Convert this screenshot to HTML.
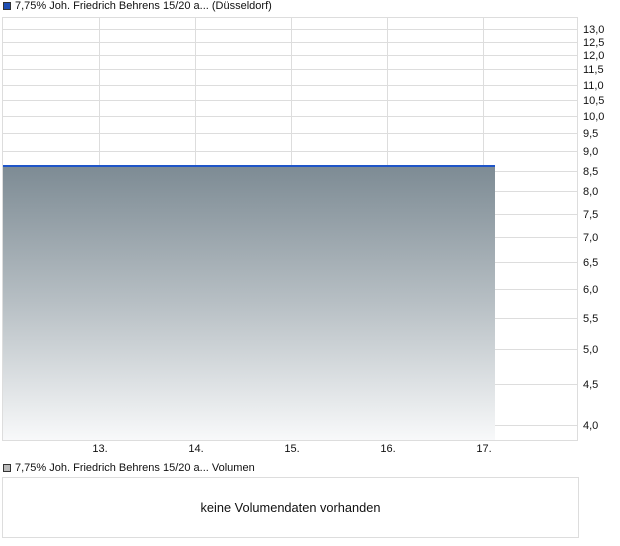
<!DOCTYPE html>
<html><head><style>
body{margin:0;width:620px;height:546px;background:#fff;font-family:"Liberation Sans",sans-serif;font-size:11px;color:#111;position:relative;overflow:hidden}
.a{position:absolute}
.h{position:absolute;left:3px;width:575px;height:1px;background:#ddd}
.v{position:absolute;top:18px;height:423px;width:1px;background:#ddd}
.y{position:absolute;left:583px;line-height:12px}
.x{position:absolute;top:443px;line-height:12px;width:30px;text-align:center}
</style></head><body>
<div class="a" style="left:3px;top:2px;width:8px;height:8px;background:#1f4fb5;border:1px solid #333;box-sizing:border-box"></div>
<div class="a" style="left:15px;top:0;line-height:12px">7,75% Joh. Friedrich Behrens 15/20 a... (Düsseldorf)</div>
<div class="a" style="left:2px;top:17px;width:576px;height:424px;border:1px solid #ddd;box-sizing:border-box"></div>
<div class="h" style="top:29px"></div><div class="h" style="top:42px"></div><div class="h" style="top:55px"></div><div class="h" style="top:69px"></div><div class="h" style="top:85px"></div><div class="h" style="top:100px"></div><div class="h" style="top:116px"></div><div class="h" style="top:133px"></div><div class="h" style="top:151px"></div><div class="h" style="top:171px"></div><div class="h" style="top:191px"></div><div class="h" style="top:214px"></div><div class="h" style="top:237px"></div><div class="h" style="top:262px"></div><div class="h" style="top:289px"></div><div class="h" style="top:318px"></div><div class="h" style="top:349px"></div><div class="h" style="top:384px"></div><div class="h" style="top:425px"></div>
<div class="v" style="left:99px"></div><div class="v" style="left:195px"></div><div class="v" style="left:291px"></div><div class="v" style="left:387px"></div><div class="v" style="left:483px"></div>
<div class="a" style="left:3px;top:166px;width:492px;height:274px;background:linear-gradient(#7d8b94,#b7bfc4 50%,#f8f9fa)"></div>
<div class="a" style="left:3px;top:165px;width:492px;height:2px;background:#1f55c8"></div>
<div class="y" style="top:24px">13,0</div><div class="y" style="top:37px">12,5</div><div class="y" style="top:50px">12,0</div><div class="y" style="top:64px">11,5</div><div class="y" style="top:80px">11,0</div><div class="y" style="top:95px">10,5</div><div class="y" style="top:111px">10,0</div><div class="y" style="top:128px">9,5</div><div class="y" style="top:146px">9,0</div><div class="y" style="top:166px">8,5</div><div class="y" style="top:186px">8,0</div><div class="y" style="top:209px">7,5</div><div class="y" style="top:232px">7,0</div><div class="y" style="top:257px">6,5</div><div class="y" style="top:284px">6,0</div><div class="y" style="top:313px">5,5</div><div class="y" style="top:344px">5,0</div><div class="y" style="top:379px">4,5</div><div class="y" style="top:420px">4,0</div>
<div class="x" style="left:85px">13.</div><div class="x" style="left:181px">14.</div><div class="x" style="left:277px">15.</div><div class="x" style="left:373px">16.</div><div class="x" style="left:469px">17.</div>
<div class="a" style="left:3px;top:464px;width:8px;height:8px;background:#bbb;border:1px solid #333;box-sizing:border-box"></div>
<div class="a" style="left:15px;top:462px;line-height:12px">7,75% Joh. Friedrich Behrens 15/20 a... Volumen</div>
<div class="a" style="left:2px;top:477px;width:577px;height:61px;border:1px solid #ddd;box-sizing:border-box"></div>
<div class="a" style="left:2px;top:500px;width:577px;text-align:center;font-size:12.8px;line-height:15px;color:#111">keine Volumendaten vorhanden</div>
</body></html>
